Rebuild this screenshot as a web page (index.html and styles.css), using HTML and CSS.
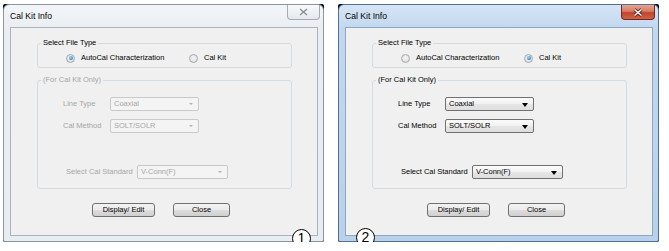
FILE: index.html
```html
<!DOCTYPE html>
<html>
<head>
<meta charset="utf-8">
<title>Cal Kit Info</title>
<link rel="stylesheet" href="styles.css">
</head>
<body>
<div class="stage">
  <div class="shot">
    <div class="win inactive">
      <div class="titlebar">
        <span class="title">Cal Kit Info</span>
        <span class="close">
          <svg width="9" height="8" viewBox="0 0 9 8"><path d="M1 1 L8 7 M8 1 L1 7" stroke="#8a8a8a" stroke-width="1.2" fill="none"/></svg>
        </span>
      </div>
      <div class="client">
        <fieldset class="group g1">
          <legend>Select File Type</legend>
          <div class="radios">
            <span class="radio r-first"><span class="dot on"></span>AutoCal Characterization</span>
            <span class="radio"><span class="dot"></span>Cal Kit</span>
          </div>
        </fieldset>
        <fieldset class="group g2 disabled">
          <legend>(For Cal Kit Only)</legend>
          <div class="row row-line"><span class="lbl">Line Type</span><span class="combo">Coaxial<i class="arrow"></i></span></div>
          <div class="row row-method"><span class="lbl">Cal Method</span><span class="combo">SOLT/SOLR<i class="arrow"></i></span></div>
          <div class="row row-std"><span class="lbl">Select Cal Standard</span><span class="combo wide">V-Conn(F)<i class="arrow"></i></span></div>
        </fieldset>
        <div class="buttons"><span class="btn btn-edit">Display/ Edit</span><span class="btn btn-close">Close</span></div>
      </div>
    </div>
    <span class="callout callout-1">1</span>
  </div>

  <div class="shot">
    <div class="win active">
      <div class="titlebar">
        <span class="title">Cal Kit Info</span>
        <span class="close">
          <svg width="10" height="9" viewBox="0 0 10 9"><path d="M1.5 1.5 L8.5 7.5 M8.5 1.5 L1.5 7.5" stroke="#5a1a10" stroke-width="3" fill="none"/><path d="M1.5 1.5 L8.5 7.5 M8.5 1.5 L1.5 7.5" stroke="#ffffff" stroke-width="1.6" fill="none"/></svg>
        </span>
      </div>
      <div class="client">
        <fieldset class="group g1">
          <legend>Select File Type</legend>
          <div class="radios">
            <span class="radio r-first"><span class="dot"></span>AutoCal Characterization</span>
            <span class="radio"><span class="dot on"></span>Cal Kit</span>
          </div>
        </fieldset>
        <fieldset class="group g2">
          <legend>(For Cal Kit Only)</legend>
          <div class="row row-line"><span class="lbl">Line Type</span><span class="combo">Coaxial<i class="arrow"></i></span></div>
          <div class="row row-method"><span class="lbl">Cal Method</span><span class="combo">SOLT/SOLR<i class="arrow"></i></span></div>
          <div class="row row-std"><span class="lbl">Select Cal Standard</span><span class="combo wide">V-Conn(F)<i class="arrow"></i></span></div>
        </fieldset>
        <div class="buttons"><span class="btn btn-edit">Display/ Edit</span><span class="btn btn-close">Close</span></div>
      </div>
    </div>
    <span class="callout callout-2">2</span>
  </div>
</div>
</body>
</html>
```

FILE: styles.css
```css
* { box-sizing: border-box; }

html, body {
  margin: 0;
  padding: 0;
  background: #ffffff;
}

body {
  font-family: "Liberation Sans", Arial, sans-serif;
  font-size: 7.5px;
  color: #000;
}

.stage {
  display: flex;
  gap: 14px;
  padding: 4px 0 0 3px;
}

.shot {
  position: relative;
  width: 321px;
  height: 238px;
  background: #000;
  border-radius: 2px;
}

.win {
  width: 321px;
  height: 238px;
  border: 1px solid #8d96a0;
  border-radius: 6px 6px 2px 2px;
  padding: 0 5px 5px 6px;
  display: flex;
  flex-direction: column;
}

.win.inactive {
  background: linear-gradient(to bottom, #f3f6f9 0px, #eaeef3 22px, #e8edf2 100%);
}

.win.active {
  border-color: #4f6f95;
  background: linear-gradient(to bottom, #d6e5f5 0px, #c3d8ef 22px, #b9d1ea 100%);
}

.titlebar {
  height: 22px;
  display: flex;
  justify-content: space-between;
  align-items: flex-start;
}

.title {
  font-size: 8.6px;
  line-height: 10px;
  margin-top: 6px;
  color: #000;
}

.close {
  width: 33px;
  height: 15px;
  margin-right: -2px;
  border: 1px solid #a4abb4;
  border-top: none;
  border-radius: 0 0 4px 4px;
  display: flex;
  align-items: center;
  justify-content: center;
  background: linear-gradient(to bottom, #f8f9fb, #e4e8ee);
}

.active .close {
  width: 34px;
  border-color: #6e2a1e;
  background: linear-gradient(to bottom, #e6a592 0%, #d77a62 45%, #c2442b 55%, #d0624a 100%);
}

.client {
  flex: 1;
  background: #f0f0f0;
  border: 1px solid #aab3bd;
  padding: 10px 0 0 26px;
}

.active .client {
  border-color: #8ea6c2;
}

.group {
  margin: 0;
  width: 255px;
  border: 1px solid #d3dce2;
  border-radius: 3px;
  padding: 5px 0 4px 0;
  min-inline-size: 0;
}

.group legend {
  padding: 0 2px;
  margin-left: 3px;
  line-height: 10px;
  font-size: 7.5px;
}

.radios {
  display: flex;
  height: 10px;
  align-items: center;
  padding-left: 28px;
}

.radio {
  display: flex;
  align-items: center;
  gap: 6px;
  line-height: 10px;
}

.r-first { width: 123px; }

.dot {
  width: 9px;
  height: 9px;
  border-radius: 50%;
  border: 1px solid #a3a9af;
  background: radial-gradient(circle at 50% 40%, #f4f5f6 0%, #dfe2e5 70%, #cfd3d7 100%);
  position: relative;
  flex: none;
}

.dot.on::after {
  content: "";
  position: absolute;
  left: 1.5px;
  top: 1.5px;
  width: 4px;
  height: 4px;
  border-radius: 50%;
  background: radial-gradient(circle at 40% 35%, #9fdcf7 0%, #3b8ed0 60%, #1d5f99 100%);
}

.inactive .dot.on::after {
  background: radial-gradient(circle at 40% 35%, #a8d8ef 0%, #4a91c4 60%, #2a628e 100%);
}

.g2 {
  margin-top: 7px;
  padding: 12px 0 9px 0;
}

.row {
  display: flex;
  align-items: center;
  height: 14px;
}

.row-method { margin-top: 8px; }
.row-std { margin-top: 32px; }

.lbl {
  width: 47px;
  margin-left: 25px;
  line-height: 10px;
}

.row-std .lbl {
  width: 71px;
  margin-left: 28px;
}

.combo {
  position: relative;
  width: 89px;
  height: 14px;
  line-height: 12px;
  padding-left: 3px;
  border: 1px solid #707070;
  border-radius: 2px;
  background: linear-gradient(to bottom, #fbfbfb 0%, #f1f1f1 50%, #e6e6e6 51%, #dedede 100%);
}

.combo.wide { width: 91px; }

.arrow {
  position: absolute;
  right: 5px;
  top: 4.5px;
  width: 0;
  height: 0;
  border-left: 3.5px solid transparent;
  border-right: 3.5px solid transparent;
  border-top: 4px solid #000;
}

.disabled,
.disabled legend,
.disabled .lbl {
  color: #a6a6a6;
}

.disabled .combo {
  border-color: #c9c9c9;
  background: #f4f4f4;
  color: #a6a6a6;
}

.disabled .arrow {
  top: 5px;
  border-left-width: 2.5px;
  border-right-width: 2.5px;
  border-top: 2.5px solid #b0b0b0;
}

.buttons {
  display: flex;
  gap: 18px;
  margin-top: 14px;
  padding-left: 55px;
}

.btn {
  height: 14px;
  line-height: 12px;
  text-align: center;
  border: 1px solid #707070;
  border-radius: 3px;
  background: linear-gradient(to bottom, #f2f2f2 0%, #ebebeb 50%, #dddddd 51%, #cfcfcf 100%);
}

.btn-edit { width: 63px; }
.btn-close { width: 57px; }

.callout {
  position: absolute;
  width: 19px;
  height: 19px;
  border: 1.4px solid #000;
  border-radius: 50%;
  background: #fff;
  font-size: 14px;
  line-height: 16px;
  text-align: center;
  color: #000;
}

.callout-1 { left: 289px; top: 225px; }
.callout-2 { left: 18px; top: 224px; }
```
